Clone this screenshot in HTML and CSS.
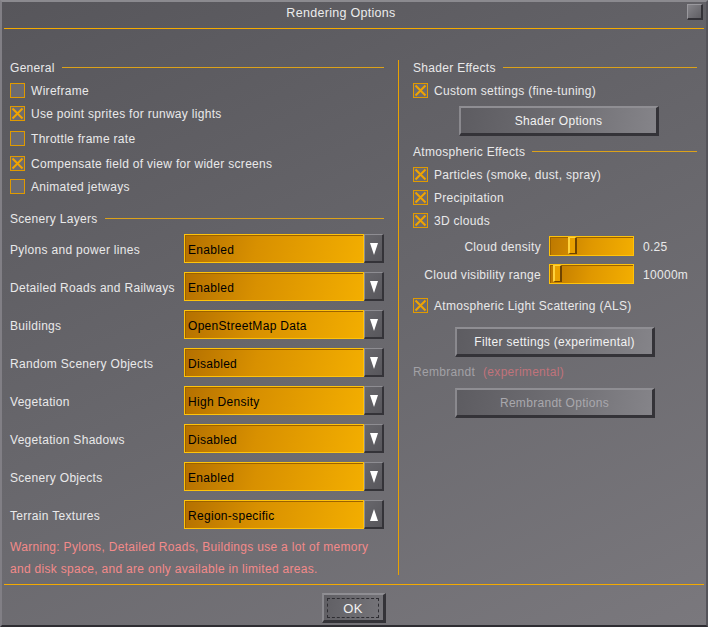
FILE: index.html
```html
<!DOCTYPE html>
<html>
<head>
<meta charset="utf-8">
<title>Rendering Options</title>
<link rel="stylesheet" href="styles.css">
</head>
<body>
<div class="window">
  <div class="titlebar">
    <span class="title">Rendering Options</span>
    <span class="close"></span>
  </div>
  <div class="hline"></div>
  <div class="main">
    <div class="col left">
      <div class="heading"><span>General</span><span class="rule"></span></div>
      <div class="check first"><svg class="box" viewBox="0 0 15 15"><rect x="0.5" y="0.5" width="14" height="14"/></svg><span>Wireframe</span></div>
      <div class="check"><svg class="box on" viewBox="0 0 15 15"><rect x="0.5" y="0.5" width="14" height="14"/><path d="M2.5 2.5L12.5 12.5M12.5 2.5L2.5 12.5"/></svg><span>Use point sprites for runway lights</span></div>
      <div class="check nudge"><svg class="box" viewBox="0 0 15 15"><rect x="0.5" y="0.5" width="14" height="14"/></svg><span>Throttle frame rate</span></div>
      <div class="check nudge"><svg class="box on" viewBox="0 0 15 15"><rect x="0.5" y="0.5" width="14" height="14"/><path d="M2.5 2.5L12.5 12.5M12.5 2.5L2.5 12.5"/></svg><span>Compensate field of view for wider screens</span></div>
      <div class="check"><svg class="box" viewBox="0 0 15 15"><rect x="0.5" y="0.5" width="14" height="14"/></svg><span>Animated jetways</span></div>

      <div class="heading scenery"><span>Scenery Layers</span><span class="rule"></span></div>
      <div class="combo-row"><span class="combo-label">Pylons and power lines</span><span class="combo-field">Enabled</span><span class="combo-arrow"><svg viewBox="0 0 8 12"><polygon points="0,0 8,0 4,12"/></svg></span></div>
      <div class="combo-row"><span class="combo-label">Detailed Roads and Railways</span><span class="combo-field">Enabled</span><span class="combo-arrow"><svg viewBox="0 0 8 12"><polygon points="0,0 8,0 4,12"/></svg></span></div>
      <div class="combo-row"><span class="combo-label">Buildings</span><span class="combo-field">OpenStreetMap Data</span><span class="combo-arrow"><svg viewBox="0 0 8 12"><polygon points="0,0 8,0 4,12"/></svg></span></div>
      <div class="combo-row"><span class="combo-label">Random Scenery Objects</span><span class="combo-field">Disabled</span><span class="combo-arrow"><svg viewBox="0 0 8 12"><polygon points="0,0 8,0 4,12"/></svg></span></div>
      <div class="combo-row"><span class="combo-label">Vegetation</span><span class="combo-field">High Density</span><span class="combo-arrow"><svg viewBox="0 0 8 12"><polygon points="0,0 8,0 4,12"/></svg></span></div>
      <div class="combo-row"><span class="combo-label">Vegetation Shadows</span><span class="combo-field">Disabled</span><span class="combo-arrow"><svg viewBox="0 0 8 12"><polygon points="0,0 8,0 4,12"/></svg></span></div>
      <div class="combo-row"><span class="combo-label">Scenery Objects</span><span class="combo-field">Enabled</span><span class="combo-arrow"><svg viewBox="0 0 8 12"><polygon points="0,0 8,0 4,12"/></svg></span></div>
      <div class="combo-row"><span class="combo-label">Terrain Textures</span><span class="combo-field">Region-specific</span><span class="combo-arrow"><svg viewBox="0 0 8 12"><polygon points="4,0 8,12 0,12"/></svg></span></div>
      <p class="warning">Warning: Pylons, Detailed Roads, Buildings use a lot of memory<br>and disk space, and are only available in limited areas.</p>
    </div>

    <div class="col right">
      <div class="heading"><span>Shader Effects</span><span class="rule"></span></div>
      <div class="check first"><svg class="box on" viewBox="0 0 15 15"><rect x="0.5" y="0.5" width="14" height="14"/><path d="M2.5 2.5L12.5 12.5M12.5 2.5L2.5 12.5"/></svg><span>Custom settings (fine-tuning)</span></div>
      <div class="btn shader">Shader Options</div>

      <div class="heading atmo"><span>Atmospheric Effects</span><span class="rule"></span></div>
      <div class="check first"><svg class="box on" viewBox="0 0 15 15"><rect x="0.5" y="0.5" width="14" height="14"/><path d="M2.5 2.5L12.5 12.5M12.5 2.5L2.5 12.5"/></svg><span>Particles (smoke, dust, spray)</span></div>
      <div class="check"><svg class="box on" viewBox="0 0 15 15"><rect x="0.5" y="0.5" width="14" height="14"/><path d="M2.5 2.5L12.5 12.5M12.5 2.5L2.5 12.5"/></svg><span>Precipitation</span></div>
      <div class="check"><svg class="box on" viewBox="0 0 15 15"><rect x="0.5" y="0.5" width="14" height="14"/><path d="M2.5 2.5L12.5 12.5M12.5 2.5L2.5 12.5"/></svg><span>3D clouds</span></div>

      <div class="slider-row density">
        <span class="slider-label">Cloud density</span>
        <span class="slider"><span class="knob" style="left: 18px"></span></span>
        <span class="slider-value">0.25</span>
      </div>
      <div class="slider-row range">
        <span class="slider-label">Cloud visibility range</span>
        <span class="slider"><span class="knob" style="left: 3px"></span></span>
        <span class="slider-value">10000m</span>
      </div>

      <div class="check als"><svg class="box on" viewBox="0 0 15 15"><rect x="0.5" y="0.5" width="14" height="14"/><path d="M2.5 2.5L12.5 12.5M12.5 2.5L2.5 12.5"/></svg><span>Atmospheric Light Scattering (ALS)</span></div>
      <div class="btn filter">Filter settings (experimental)</div>
      <div class="rembrandt"><span class="dim">Rembrandt</span><span class="exp">(experimental)</span></div>
      <div class="btn rembrandt-btn">Rembrandt Options</div>
    </div>
  </div>
  <div class="hline"></div>
  <div class="footer">
    <div class="btn ok"><span class="focus">OK</span></div>
  </div>
</div>
</body>
</html>
```
FILE: styles.css
```css
* { box-sizing: border-box; }

html, body {
  margin: 0;
  padding: 0;
}

body {
  width: 708px;
  height: 627px;
  font-family: "Liberation Sans", Arial, sans-serif;
  font-size: 12px;
  letter-spacing: 0.3px;
  color: #e9e9ea;
}

.window {
  width: 708px;
  height: 627px;
  display: flex;
  flex-direction: column;
  background: linear-gradient(155deg, #57565b 0%, #68676c 50%, #7a787d 100%);
  border-top: 2px solid #8b8a8f;
  border-left: 2px solid #817f85;
  border-right: 2px solid #55545a;
  border-bottom: 2px solid #2e2d32;
}

.titlebar {
  height: 26px;
  display: grid;
  grid-template-columns: 1fr auto 1fr;
  align-items: start;
}

.title {
  grid-column: 2;
  margin-top: 3px;
  margin-right: 26px;
  line-height: 16px;
  font-size: 12.5px;
  color: #ececec;
}

.close {
  grid-column: 3;
  justify-self: end;
  width: 16px;
  height: 16px;
  margin-top: 2px;
  margin-right: 3px;
  border-top: 1px solid #9a999e;
  border-left: 1px solid #9a999e;
  border-right: 2px solid #333237;
  border-bottom: 2px solid #333237;
  background: linear-gradient(135deg, #858489, #5f5e63);
}

.hline {
  height: 1px;
  margin: 0 2px;
  background: #f3aa00;
  flex: none;
}

.main {
  height: 555px;
  display: flex;
  padding: 31px 0 9px 0;
}

.col.left {
  width: 396px;
  padding: 0 14px 0 8px;
}

.col.right {
  width: 308px;
  border-left: 1px solid #e9a200;
  padding: 0 9px 0 14px;
}

.heading {
  display: flex;
  align-items: center;
  gap: 7px;
  height: 14px;
  line-height: 14px;
}

.heading span:first-child {
  padding-top: 1px;
}

.heading .rule {
  flex: 1;
  height: 1px;
  background: #dca21a;
}

.heading.scenery { margin-top: 13px; }
.heading.atmo { margin-top: 8px; }

.check {
  display: flex;
  align-items: center;
  gap: 6px;
  height: 23px;
}

.check span {
  padding-top: 1px;
}

.check.first { margin-top: 5px; }
.check.nudge { margin-top: 2px; }
.check.als { margin-top: 10px; }

.box {
  width: 15px;
  height: 15px;
  flex: none;
}

.box rect {
  fill: #6c6b70;
  stroke: #e09a00;
  stroke-width: 1;
}

.box path {
  stroke: #f0a400;
  stroke-width: 2;
  fill: none;
}

.combo-row {
  display: flex;
  align-items: center;
  height: 29px;
  margin-top: 9px;
}

.combo-label {
  width: 174px;
  flex: none;
  padding-top: 2px;
}

.combo-field {
  width: 180px;
  height: 29px;
  line-height: 27px;
  padding: 2px 0 0 3px;
  color: #000;
  border: 1px solid #ffc30a;
  box-shadow: inset 1px 1px 0 #9c6200;
  background: linear-gradient(105deg, #b47000 0%, #d89000 40%, #f3ae00 100%);
}

.combo-arrow {
  width: 20px;
  height: 29px;
  display: flex;
  align-items: center;
  justify-content: center;
  padding-top: 1px;
  border-top: 1px solid #8e8d92;
  border-left: 1px solid #8e8d92;
  border-right: 2px solid #343338;
  border-bottom: 2px solid #343338;
  background: linear-gradient(135deg, #67666b, #58575c);
}

.combo-arrow svg {
  width: 8px;
  height: 12px;
}

.combo-arrow polygon { fill: #ffffff; }

.warning {
  margin: 7px 0 0 0;
  line-height: 22px;
  color: #f38a8a;
}

.btn {
  width: 200px;
  height: 30px;
  display: flex;
  align-items: center;
  justify-content: center;
  padding-top: 1px;
  color: #f2f2f2;
  border-top: 2px solid #8f8e93;
  border-left: 2px solid #8a898e;
  border-right: 3px solid #343338;
  border-bottom: 3px solid #343338;
  background: linear-gradient(100deg, #5d5c61 0%, #6e6d72 50%, #858489 100%);
}

.btn.shader {
  margin: 4px 0 0 46px;
}

.btn.filter {
  margin: 10px 0 0 42px;
}

.btn.rembrandt-btn {
  margin: 8px 0 0 42px;
  color: #a9a8ad;
}

.slider-row {
  display: flex;
  align-items: center;
  height: 20px;
}

.slider-row.density { margin-top: 4px; }
.slider-row.range { margin-top: 8px; }

.slider-label {
  width: 128px;
  text-align: right;
  flex: none;
  padding-top: 1px;
}

.slider {
  position: relative;
  width: 85px;
  height: 20px;
  margin-left: 8px;
  border: 1px solid #ffc30a;
  box-shadow: inset 1px 1px 0 #9c6200;
  background: linear-gradient(100deg, #bd7800 0%, #e09800 50%, #f3ae00 100%);
  flex: none;
}

.knob {
  position: absolute;
  top: 0;
  width: 9px;
  height: 17px;
  border-left: 2px solid #ffd23c;
  border-top: 1px solid #ffd23c;
  border-right: 2px solid #6f4400;
  border-bottom: 1px solid #6f4400;
  background: #e9a100;
}

.slider-value {
  margin-left: 9px;
  padding-top: 1px;
}

.rembrandt {
  margin-top: 7px;
  height: 16px;
  line-height: 16px;
  display: flex;
  gap: 8px;
}

.rembrandt .dim { color: #a2a1a6; }
.rembrandt .exp { color: #c0737b; }

.footer {
  flex: 1;
  display: flex;
  justify-content: center;
  padding-top: 8px;
}

.btn.ok {
  width: 64px;
  height: 30px;
  padding: 3px 4px 2px 3px;
  background: linear-gradient(100deg, #605f64 0%, #76757a 100%);
}

.ok .focus {
  width: 100%;
  height: 100%;
  display: flex;
  align-items: center;
  justify-content: center;
  border: 1px dashed #2e2d32;
  font-size: 13px;
}
```
